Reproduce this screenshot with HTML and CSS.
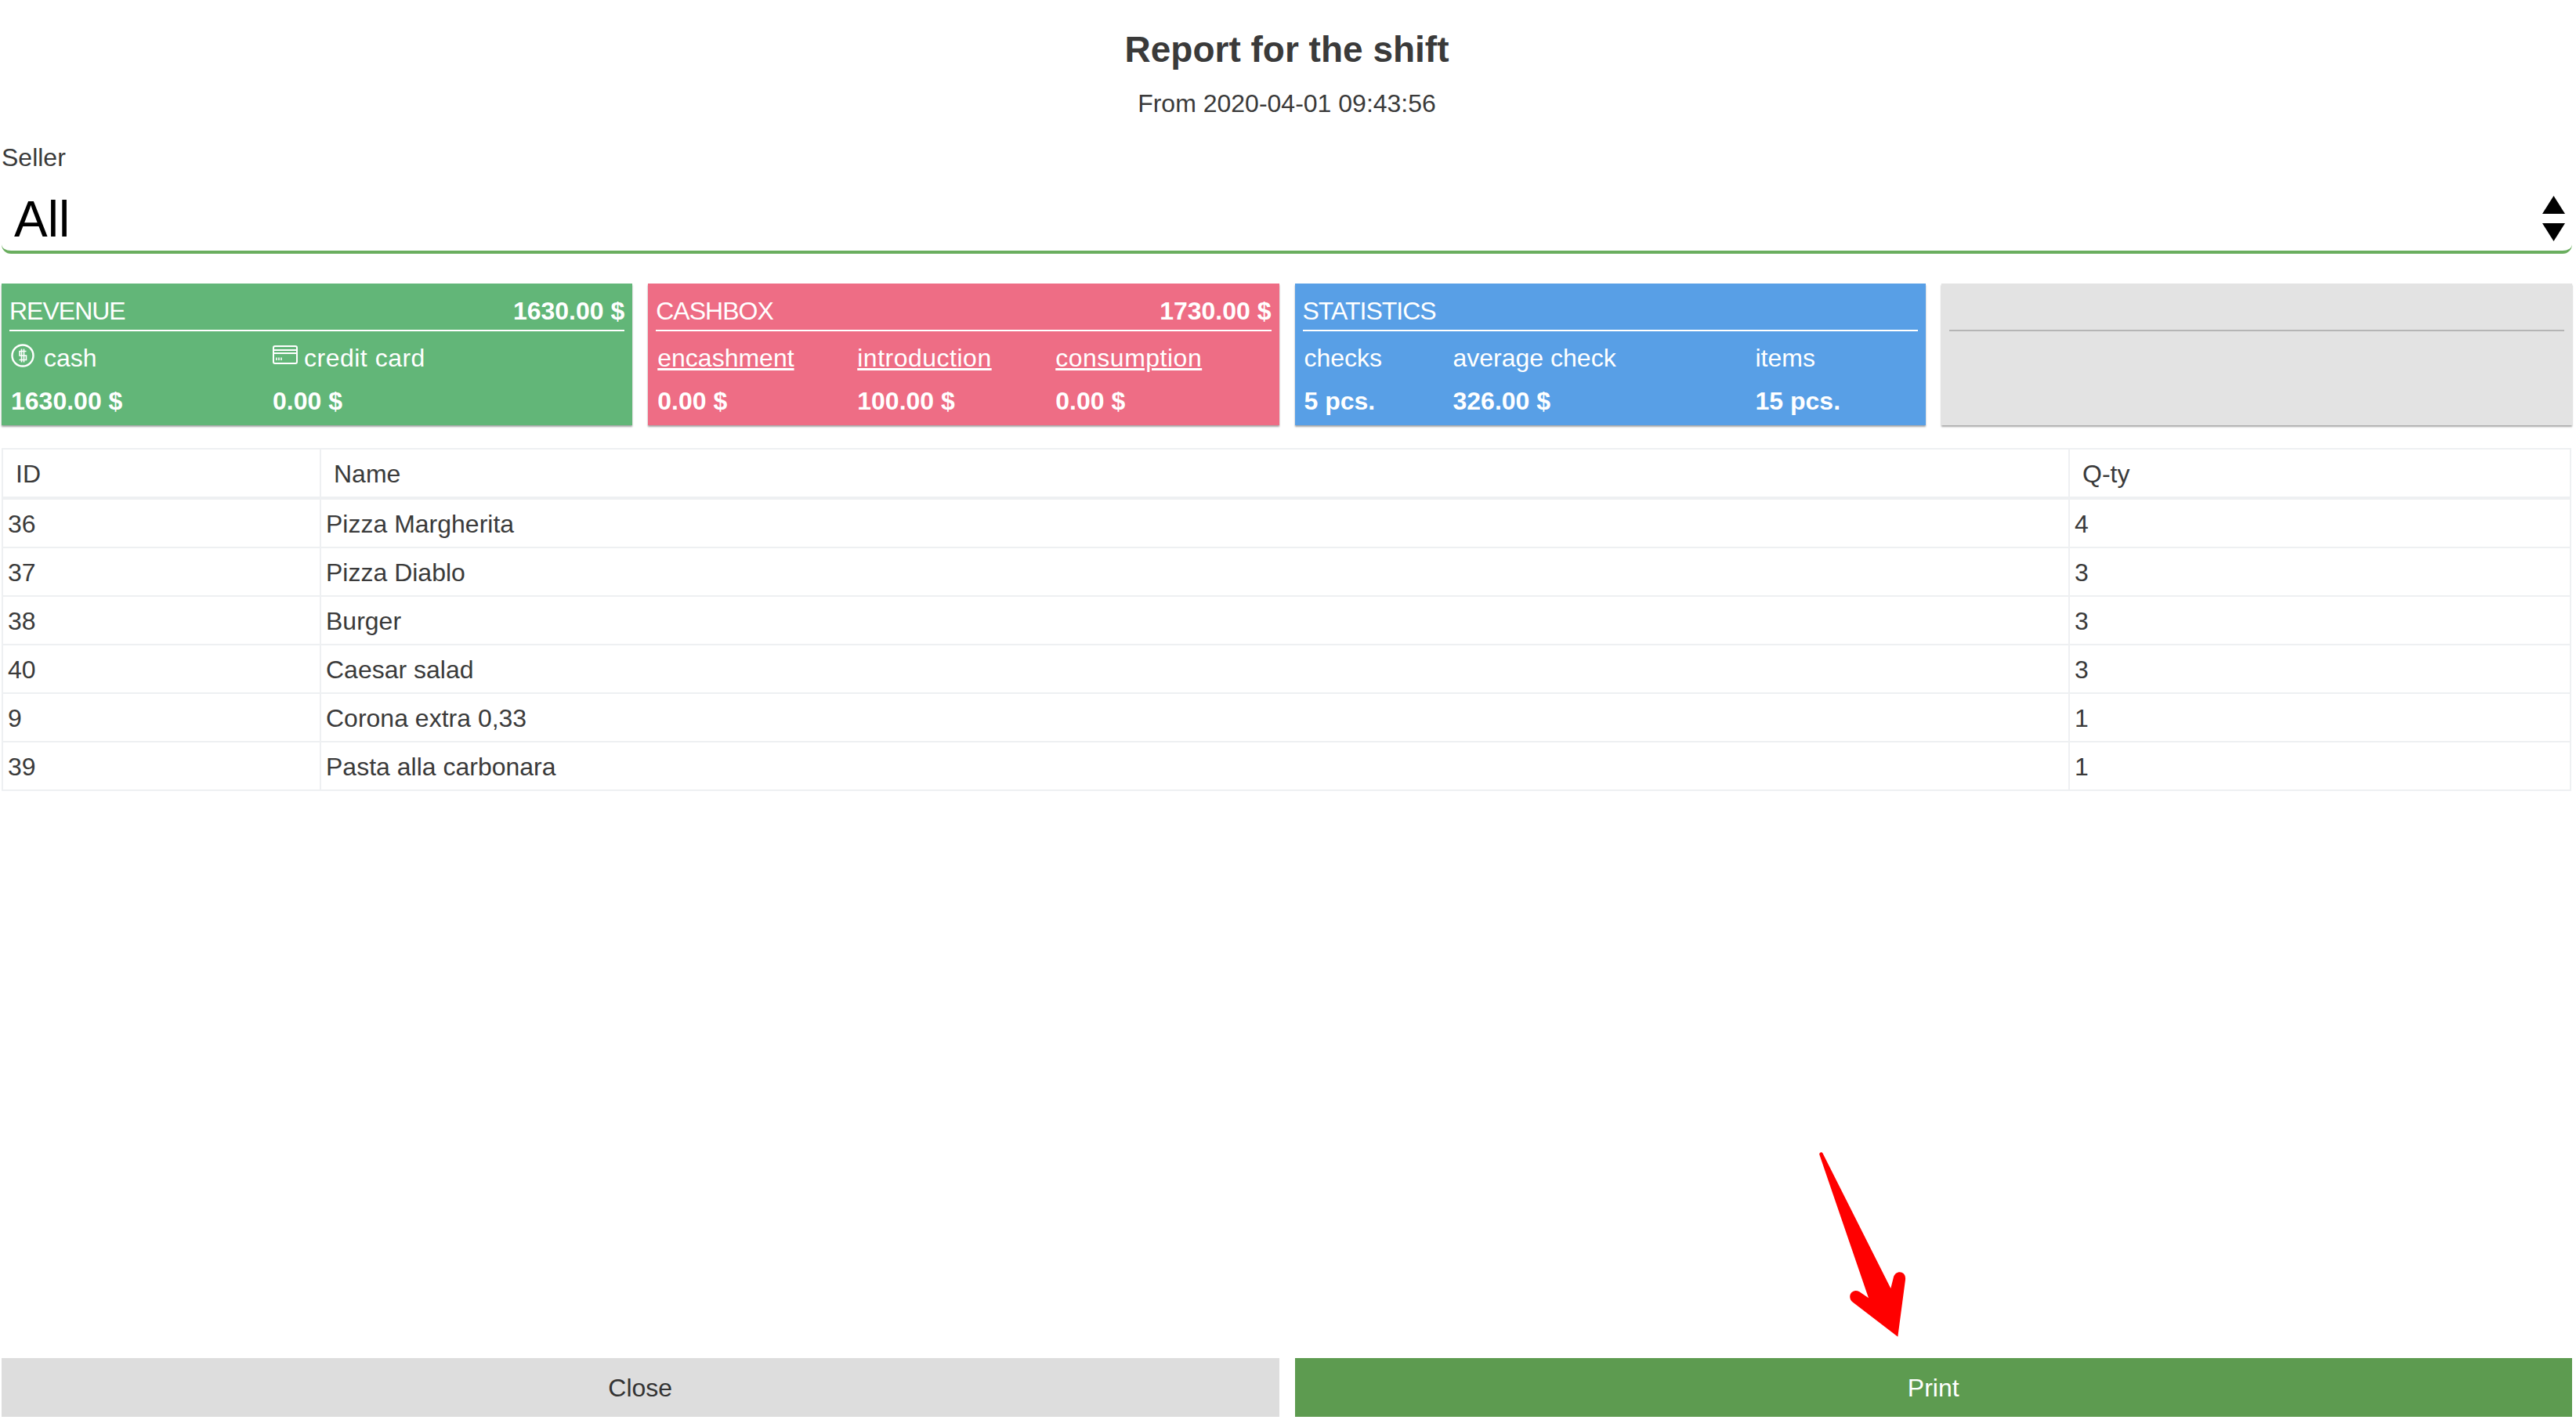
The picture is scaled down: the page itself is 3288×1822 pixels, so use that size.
FILE: index.html
```html
<!DOCTYPE html>
<html lang="en">
<head>
    <meta charset="UTF-8">
    <title>Report for the shift</title>
    <link rel="stylesheet" href="styles.css">
</head>
<body>
    <h1 class="title">Report for the shift</h1>
    <p class="subtitle">From 2020-04-01 09:43:56</p>

    <div class="seller-label">Seller</div>
    <div class="select">
        <span>All</span>
        <svg class="select-arrows" viewBox="0 0 29 58" width="29" height="58">
            <path d="M14.5 0L29 23H0z"/>
            <path d="M0 35H29L14.5 58z"/>
        </svg>
    </div>

    <div class="cards">
        <div class="card card-green">
            <div class="card-head"><span>REVENUE</span><strong>1630.00 $</strong></div>
            <div class="card-grid cols-revenue">
                <span class="with-icon">
                    <svg class="icon-cash" viewBox="0 0 30 30" width="30" height="30" fill="none" stroke="#fff">
                        <circle cx="15" cy="15" r="13.5" stroke-width="2.4"/>
                        <path d="M19.5 9.5H11V15H19.5V20.5H10.5M13.5 6.5V23.5M16.5 6.5V23.5" stroke-width="1.6"/>
                    </svg>
                    <span>cash</span>
                </span>
                <span class="with-icon">
                    <svg class="icon-card" viewBox="0 0 32 24" width="32" height="24" fill="none" stroke="#fff">
                        <rect x="1" y="1" width="30" height="22" rx="2" stroke-width="2"/>
                        <path d="M1 6H31M1 10H31" stroke-width="2"/>
                        <path d="M5 15.5V19M8 15.5V19M11 15.5V19" stroke-width="1.6"/>
                    </svg>
                    <span class="link-wide">credit card</span>
                </span>
                <strong>1630.00 $</strong>
                <strong>0.00 $</strong>
            </div>
        </div>

        <div class="card card-pink">
            <div class="card-head"><span>CASHBOX</span><strong>1730.00 $</strong></div>
            <div class="card-grid cols-cashbox">
                <a href="#">encashment</a>
                <a class="link-wide" href="#">introduction</a>
                <a class="link-wide" href="#">consumption</a>
                <strong>0.00 $</strong>
                <strong>100.00 $</strong>
                <strong>0.00 $</strong>
            </div>
        </div>

        <div class="card card-blue">
            <div class="card-head"><span>STATISTICS</span></div>
            <div class="card-grid cols-stats">
                <span>checks</span>
                <span>average check</span>
                <span>items</span>
                <strong>5 pcs.</strong>
                <strong>326.00 $</strong>
                <strong>15 pcs.</strong>
            </div>
        </div>

        <div class="card card-grey">
            <div class="card-head"></div>
        </div>
    </div>

    <table class="report">
        <thead>
            <tr>
                <th class="col-id">ID</th>
                <th class="col-name">Name</th>
                <th>Q-ty</th>
            </tr>
        </thead>
        <tbody>
            <tr><td>36</td><td>Pizza Margherita</td><td>4</td></tr>
            <tr><td>37</td><td>Pizza Diablo</td><td>3</td></tr>
            <tr><td>38</td><td>Burger</td><td>3</td></tr>
            <tr><td>40</td><td>Caesar salad</td><td>3</td></tr>
            <tr><td>9</td><td>Corona extra 0,33</td><td>1</td></tr>
            <tr><td>39</td><td>Pasta alla carbonara</td><td>1</td></tr>
        </tbody>
    </table>

    <div class="buttons">
        <button class="btn btn-close" type="button">Close</button>
        <button class="btn btn-print" type="button">Print</button>
    </div>

    <svg class="arrow" viewBox="0 0 1200 1146" width="400" height="382">
        <path fill="#f00" d="M367 103C365 93 376 90 380 98L640 615L650 575C656 544 700 545 696 582L667 800L495 668C470 650 490 612 520 628L555 652Z"/>
    </svg>
</body>
</html>
```

FILE: styles.css
```css
* {
    box-sizing: border-box;
}
body {
    position: relative;
    display: flex;
    flex-direction: column;
    height: 100vh;
    margin: 0;
    padding: 33px 5px 13px 2px;
    background-color: white;
    font-family: "Liberation Sans", Arial, sans-serif;
    font-size: 32px;
    line-height: 40px;
    color: #3a3a3a;
}
.title {
    margin: 0 0 19px;
    font-size: 46px;
    font-weight: 600;
    line-height: 60px;
    text-align: center;
}
.subtitle {
    margin: 0 0 29px;
    text-align: center;
}
.seller-label {
    margin-bottom: 21px;
}
.select {
    display: flex;
    justify-content: space-between;
    align-items: center;
    height: 82px;
    padding: 0 9px 0 16px;
    border-bottom: 4px solid #6aae5f;
    border-radius: 0 0 12px 12px;
    font-size: 64px;
    line-height: 76px;
    color: black;
}
.select span {
    align-self: flex-start;
}
.select-arrows {
    margin-top: -4px;
}
.cards {
    display: grid;
    grid-template-columns: repeat(4, 1fr);
    gap: 20px;
    margin-top: 38px;
}
.card {
    height: 181px;
    padding: 15px 10px 0;
    color: white;
    box-shadow: 0 2px 2px rgba(0, 0, 0, 0.35);
}
.card-green {
    background-color: #62b678;
}
.card-pink {
    background-color: #ee6d85;
}
.card-blue {
    background-color: #589fe6;
}
.card-grey {
    background-color: #e3e3e3;
}
.card-head {
    display: flex;
    justify-content: space-between;
    height: 46px;
    padding-bottom: 4px;
    border-bottom: 2px solid white;
}
.card-head span {
    letter-spacing: -1px;
}
.card-grey .card-head {
    border-bottom-color: #b5b5b5;
}
.card-grid {
    display: grid;
    row-gap: 15px;
    margin-top: 14px;
    padding-left: 2px;
}
.cols-revenue {
    grid-template-columns: 334px 1fr;
}
.cols-cashbox {
    grid-template-columns: 255px 253px 1fr;
}
.cols-stats {
    grid-template-columns: 190px 386px 1fr;
}
.card a {
    color: white;
}
.card .link-wide {
    letter-spacing: 0.5px;
}
.with-icon {
    display: flex;
    align-items: center;
}
.with-icon svg {
    flex-shrink: 0;
}
.icon-cash {
    margin: -6px 12px 0 0;
}
.icon-card {
    margin: -8px 8px 0 0;
}
.report {
    width: 3280px;
    margin-top: 29px;
    border-top: 2px solid #eef0f2;
    border-left: 2px solid #eef0f2;
    border-spacing: 0;
    table-layout: fixed;
}
.report th,
.report td {
    height: 62px;
    padding: 1px 6px 0;
    border-right: 2px solid #eef0f2;
    border-bottom: 2px solid #eef0f2;
    font-weight: normal;
    text-align: left;
}
.report th {
    height: 64px;
    padding-left: 16px;
    border-bottom-width: 4px;
}
.col-id {
    width: 406px;
}
.col-name {
    width: 2232px;
}
.buttons {
    display: grid;
    grid-template-columns: 1fr 1fr;
    gap: 20px;
    margin-top: auto;
}
.btn {
    height: 75px;
    padding: 0;
    border: 0;
    font: inherit;
}
.btn-close {
    background-color: #ddd;
    color: #333;
}
.btn-print {
    background-color: #5d9b50;
    color: white;
}
.arrow {
    position: absolute;
    left: 2200px;
    top: 1440px;
}
```
